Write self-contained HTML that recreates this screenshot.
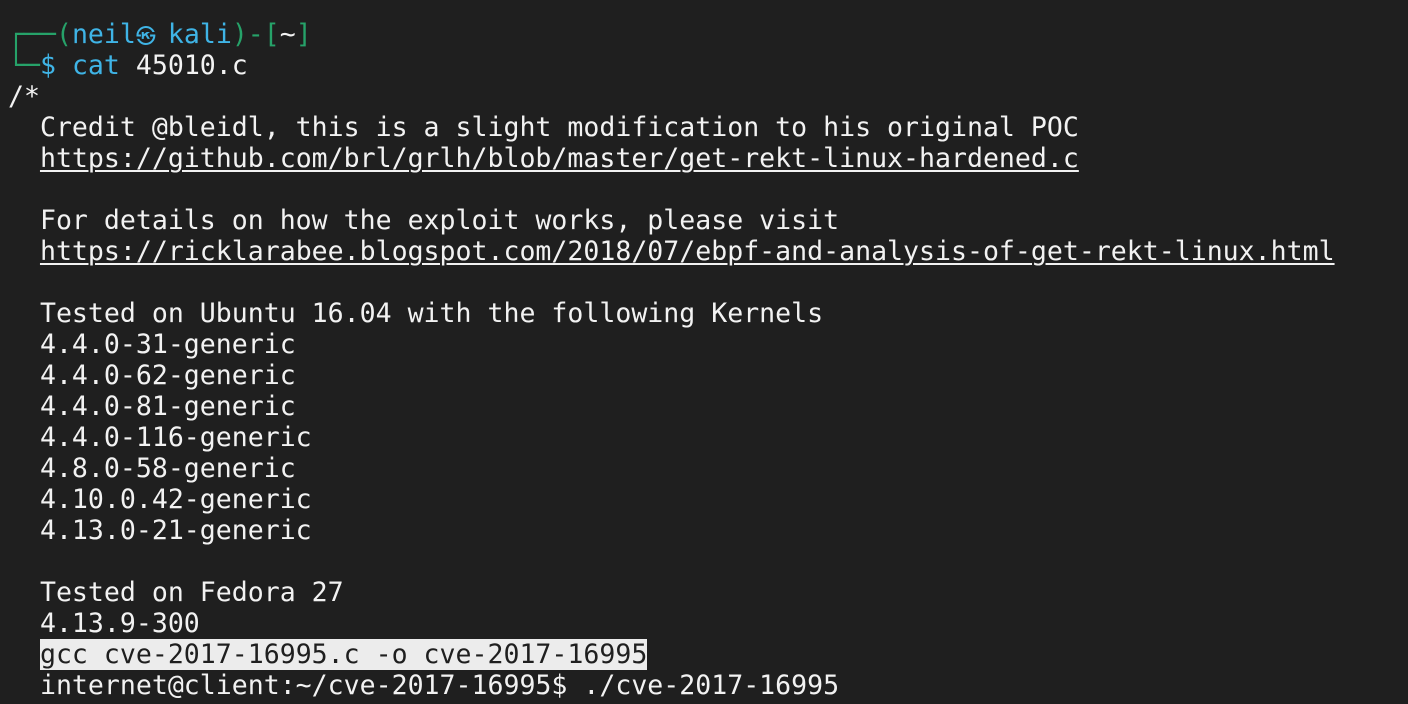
<!DOCTYPE html>
<html><head><meta charset="utf-8"><style>
html,body{margin:0;padding:0;background:#1f1f1f;width:1408px;height:704px;overflow:hidden}
pre{margin:0;position:absolute;left:8px;top:19px;font-family:"DejaVu Sans Mono","Liberation Mono",monospace;font-size:26.55px;line-height:31px;color:#f2f2f2;white-space:pre}
.g{color:#26a269}.b{color:#3fb4e6}
.k{display:inline-block;width:32px;font-size:20px;line-height:0;text-align:left}
u{text-decoration:underline;text-underline-offset:3px;text-decoration-thickness:2px}
.hl{background:#ececec;color:#1f1f1f}
</style></head><body><pre><span class="g">┌──(</span><span class="b">neil<span class="k">㉿</span>kali</span><span class="g">)-[</span>~<span class="g">]</span>
<span class="g">└─</span><span class="b">$</span> <span class="b">cat</span> 45010.c
/*
  Credit @bleidl, this is a slight modification to his original POC
  <u>https://github.com/brl/grlh/blob/master/get-rekt-linux-hardened.c</u>

  For details on how the exploit works, please visit
  <u>https://ricklarabee.blogspot.com/2018/07/ebpf-and-analysis-of-get-rekt-linux.html</u>

  Tested on Ubuntu 16.04 with the following Kernels
  4.4.0-31-generic
  4.4.0-62-generic
  4.4.0-81-generic
  4.4.0-116-generic
  4.8.0-58-generic
  4.10.0.42-generic
  4.13.0-21-generic

  Tested on Fedora 27
  4.13.9-300
  <span class="hl">gcc cve-2017-16995.c -o cve-2017-16995</span>
  internet@client:~/cve-2017-16995$ ./cve-2017-16995</pre></body></html>
